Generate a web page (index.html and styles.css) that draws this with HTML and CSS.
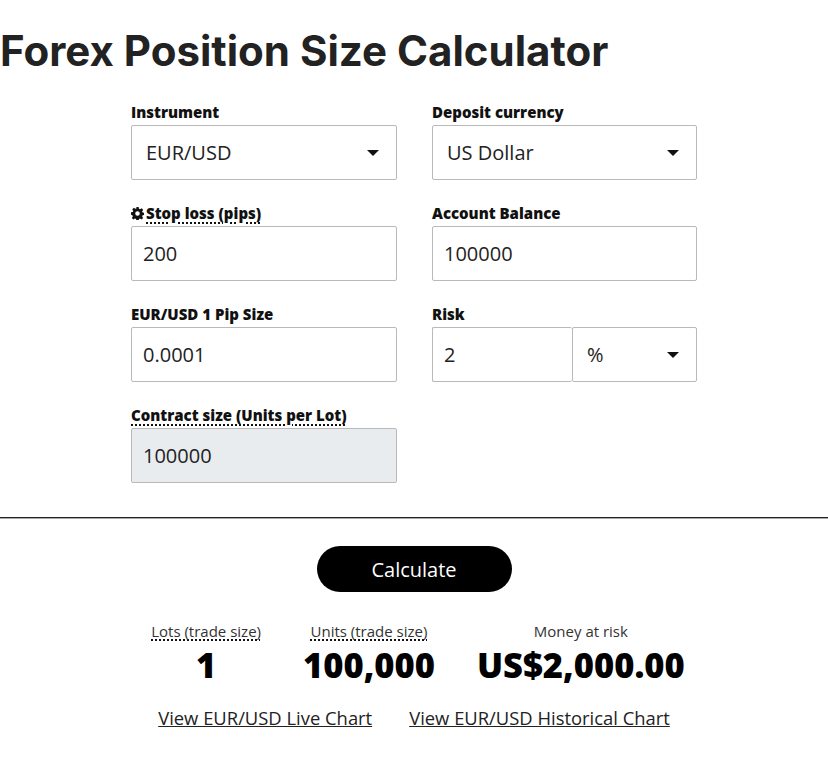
FILE: index.html
```html
<!DOCTYPE html>
<html lang="en">
<head>
    <meta charset="UTF-8">
    <title>Forex Position Size Calculator</title>
    <link rel="stylesheet" href="styles.css">
</head>
<body>
    <h1 class="title">Forex Position Size Calculator</h1>

    <form class="calc-form" onsubmit="return false">
        <div class="field">
            <label for="instrument">Instrument</label>
            <div class="select-wrap">
                <select id="instrument">
                    <option>EUR/USD</option>
                    <option>GBP/USD</option>
                    <option>USD/JPY</option>
                </select>
            </div>
        </div>
        <div class="field">
            <label for="deposit">Deposit currency</label>
            <div class="select-wrap">
                <select id="deposit">
                    <option>US Dollar</option>
                    <option>Euro</option>
                </select>
            </div>
        </div>
        <div class="field">
            <label for="stoploss"><svg class="cog" viewBox="0 0 16 16" width="13" height="13"><path d="M6.6 0h2.8l.4 2.2 1.3.6 1.9-1.3 2 2-1.3 1.9.6 1.3 2.1.4v2.8l-2.1.4-.6 1.3 1.3 1.9-2 2-1.9-1.3-1.3.6-.4 2.2H6.6l-.4-2.2-1.3-.6-1.9 1.3-2-2 1.3-1.9-.6-1.3L0 9.4V6.6l2.2-.4.6-1.3-1.3-1.9 2-2 1.9 1.3 1.3-.6zM8 5.2a2.8 2.8 0 1 0 0 5.6 2.8 2.8 0 1 0 0-5.6z" fill="#111"/></svg><span class="hint">Stop loss (pips)</span></label>
            <input type="text" id="stoploss" value="200">
        </div>
        <div class="field">
            <label for="balance">Account Balance</label>
            <input type="text" id="balance" value="100000">
        </div>
        <div class="field">
            <label for="pipsize">EUR/USD 1 Pip Size</label>
            <input type="text" id="pipsize" value="0.0001">
        </div>
        <div class="field">
            <label for="risk">Risk</label>
            <div class="risk-row">
                <input type="text" id="risk" value="2">
                <div class="select-wrap">
                    <select id="riskType">
                        <option>%</option>
                        <option>USD</option>
                    </select>
                </div>
            </div>
        </div>
        <div class="field">
            <label for="contract"><span class="hint">Contract size (Units per Lot)</span></label>
            <input type="text" id="contract" value="100000" class="readonly" readonly>
        </div>
    </form>

    <hr class="divider">

    <div class="actions">
        <button type="button" class="calc-btn">Calculate</button>
    </div>

    <div class="results">
        <div class="result">
            <span class="result-label hint">Lots (trade size)</span>
            <span class="result-value">1</span>
        </div>
        <div class="result">
            <span class="result-label hint">Units (trade size)</span>
            <span class="result-value">100,000</span>
        </div>
        <div class="result">
            <span class="result-label">Money at risk</span>
            <span class="result-value">US$2,000.00</span>
        </div>
    </div>

    <div class="links">
        <a href="#">View EUR/USD Live Chart</a>
        <a href="#">View EUR/USD Historical Chart</a>
    </div>
</body>
</html>
```

FILE: styles.css
```css
body {
    margin: 0;
    font-family: "Open Sans", "Liberation Sans", sans-serif;
    color: #111;
    background-color: #ffffff;
}

.title {
    font-family: Inter, Roboto, "Liberation Sans", sans-serif;
    font-size: 42px;
    font-weight: 700;
    line-height: 50px;
    color: #222;
    margin: 26px 0 0 0;
}

.calc-form {
    width: 566px;
    margin: 26px auto 0;
    display: grid;
    grid-template-columns: 266px 265px;
    column-gap: 35px;
    row-gap: 23px;
}

.field label {
    display: flex;
    align-items: center;
    font-size: 15px;
    font-weight: 800;
    line-height: 20px;
    margin-bottom: 3px;
    color: #111;
}

.cog {
    margin-right: 2px;
}

.hint {
    text-decoration: underline dotted #111;
    text-decoration-thickness: 2px;
    text-underline-offset: 3px;
}

input,
select {
    box-sizing: border-box;
    width: 100%;
    height: 55px;
    font-family: "Open Sans", "Liberation Sans", sans-serif;
    font-size: 20px;
    color: #222;
    border: 1px solid #b9b9b9;
    border-radius: 2px;
    background-color: #fff;
    padding: 0 11px;
    margin: 0;
    outline: none;
}

select {
    appearance: none;
    -webkit-appearance: none;
    padding: 0 14px;
}

.select-wrap {
    position: relative;
}

.select-wrap::after {
    content: "";
    position: absolute;
    right: 18px;
    top: 25px;
    border-left: 6px solid transparent;
    border-right: 6px solid transparent;
    border-top: 6px solid #111;
    pointer-events: none;
}

.risk-row {
    display: grid;
    grid-template-columns: 140px 125px;
}

.risk-row input {
    border-right: none;
}

input.readonly {
    background-color: #e9ecef;
}

.divider {
    border: none;
    border-top: 1px solid #222;
    border-bottom: 1px solid #aaa;
    margin: 34px 0 0 0;
}

.actions {
    display: flex;
    justify-content: center;
    margin-top: 27px;
}

.calc-btn {
    width: 195px;
    height: 46px;
    border: none;
    border-radius: 23px;
    background-color: #000;
    color: #fff;
    font-family: "Open Sans", "Liberation Sans", sans-serif;
    font-size: 20px;
    cursor: pointer;
}

.results {
    display: flex;
    justify-content: center;
    gap: 42px;
    padding-left: 8px;
    margin-top: 29px;
}

.result {
    display: flex;
    flex-direction: column;
    align-items: center;
}

.result-label {
    font-size: 15px;
    line-height: 20px;
    color: #333;
}

.result-label.hint {
    text-decoration-thickness: 2px;
    text-underline-offset: 2px;
}

.result-value {
    font-size: 34.5px;
    font-weight: 800;
    line-height: 44px;
    color: #000;
    margin-top: 2px;
}

.links {
    display: flex;
    justify-content: center;
    gap: 37px;
    margin-top: 19px;
}

.links a {
    font-size: 18.4px;
    line-height: 24px;
    color: #222;
    text-decoration: underline;
}
```
